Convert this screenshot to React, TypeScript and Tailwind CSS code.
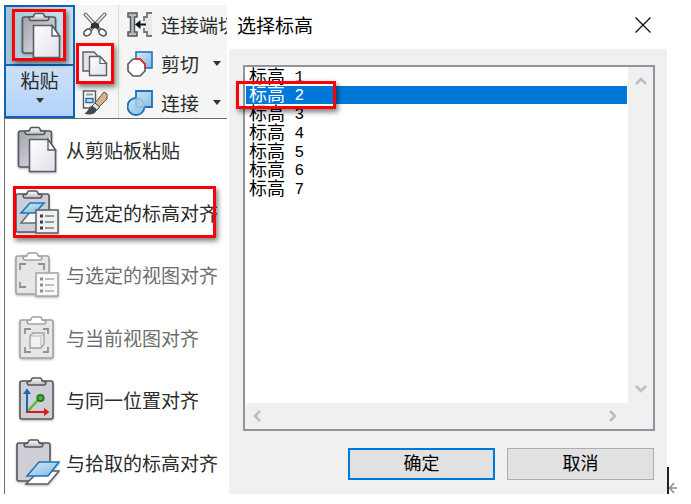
import { ReactNode, useState } from 'react';

const levels = [1, 2, 3, 4, 5, 6, 7];

// Shared gradients, referenced by id from every icon
function IconDefs() {
  return (
    <svg className="absolute w-0 h-0" aria-hidden="true">
      <defs>
        <linearGradient id="board" x1="0" y1="0" x2="1" y2="1">
          <stop offset="0" stopColor="#a0a2ad" />
          <stop offset="1" stopColor="#e6e7ec" />
        </linearGradient>
        <linearGradient id="clip" x1="0" y1="0" x2="0" y2="1">
          <stop offset="0" stopColor="#ffffff" />
          <stop offset="1" stopColor="#b9bbc0" />
        </linearGradient>
        <linearGradient id="paper" x1="0" y1="0" x2="1" y2="1">
          <stop offset="0" stopColor="#ffffff" />
          <stop offset="1" stopColor="#dfe0ea" />
        </linearGradient>
        <linearGradient id="sky" x1="0" y1="0" x2="1" y2="1">
          <stop offset="0" stopColor="#d3ecf8" />
          <stop offset="1" stopColor="#7db9e2" />
        </linearGradient>
      </defs>
    </svg>
  );
}

function Icon({ children }: { children: ReactNode }) {
  return (
    <svg viewBox="0 0 48 48" className="w-12 h-12 shrink-0 drop-shadow-[0_1px_1px_rgba(0,0,0,0.3)]" fill="none" aria-hidden="true">
      {children}
    </svg>
  );
}

function SmallIcon({ children }: { children: ReactNode }) {
  return (
    <svg viewBox="0 0 26 26" className="w-[26px] h-[26px] shrink-0" fill="none" aria-hidden="true">
      {children}
    </svg>
  );
}

function Clipboard({ x, y, faded = false }: { x: number; y: number; faded?: boolean }) {
  const stroke = faded ? '#a3a3a3' : '#55585c';
  return (
    <g transform={`translate(${x} ${y})`} stroke={stroke} strokeWidth="1.6">
      <rect x="1" y="4" width="33" height="38" rx="2" fill={faded ? '#e6e6e6' : '#cdced6'} />
      <path d="M9 4.500H11C12.500 4.500 12 1 14 1H21C23 1 22.500 4.500 24 4.500H26C27.500 4.500 27 8 25 8H10C8 8 7.500 4.500 9 4.500Z" fill={faded ? '#fff' : 'url(#clip)'} />
    </g>
  );
}

function ListBadge({ y, faded = false }: { y: number; faded?: boolean }) {
  return (
    <g transform={`translate(24 ${y})`}>
      <rect x="0" y="0" width="22" height="23" fill={faded ? '#f8f8f8' : '#eef0f2'} stroke={faded ? '#a8a8a8' : '#62676c'} strokeWidth="1.600" />
      <path d="M4 6h3M4 12h3M4 18h3" stroke={faded ? '#8c8c8c' : '#3d4145'} strokeWidth="3" />
      <path d="M9 6h9M9 12h9M9 18h9" stroke={faded ? '#aaa' : '#777c80'} strokeWidth="1.600" />
    </g>
  );
}

function PasteIcon() {
  return (
    <Icon>
      <rect x="6.500" y="5" width="33" height="36" rx="2" fill="url(#board)" stroke="#55585c" strokeWidth="1.600" />
      <path d="M14 5H17C18 5 17.500 1.500 19.500 1.500H26.500C28.500 1.500 28 5 29 5H32C33.500 5 33 8.500 31 8.500H15C13 8.500 12.500 5 14 5Z" fill="url(#clip)" stroke="#55585c" strokeWidth="1.600" />
      <path d="M17.500 13.500H36L43.500 24V45.500H17.500Z" fill="url(#paper)" stroke="#5b5e63" strokeWidth="1.600" />
      <path d="M36 13.500V24H43.500Z" fill="#fff" stroke="#5b5e63" strokeWidth="1.400" />
    </Icon>
  );
}

function LevelIcon() {
  return (
    <Icon>
      <Clipboard x={3} y={1} />
      <path d="M9 34L18 23H33L24 34Z" fill="#f6f7f8" stroke="#6a6e72" strokeWidth="1.600" />
      <path d="M9 24L18 14H32L23 24Z" fill="url(#sky)" stroke="#2274b8" strokeWidth="1.600" />
      <ListBadge y={21} />
    </Icon>
  );
}

function ViewIcon() {
  return (
    <Icon>
      <Clipboard x={3} y={1} faded />
      <path d="M8 19V13H14M26 13H32V19M8 31V36H14" stroke="#909090" strokeWidth="1.800" />
      <ListBadge y={22} faded />
    </Icon>
  );
}

function CurrentViewIcon() {
  return (
    <Icon>
      <Clipboard x={7} y={2} faded />
      <path d="M13 20V15H19M31 15H36V20M13 33V38H19M31 38H36V33" stroke="#909090" strokeWidth="1.800" />
      <path d="M18 22L21 19H32V30L29 34H18Z" fill="#f2f2f2" stroke="#a0a0a0" strokeWidth="1.400" />
      <path d="M18 22H29V34M29 22L32 19" stroke="#b5b5b5" />
    </Icon>
  );
}

function SamePlaceIcon() {
  return (
    <Icon>
      <Clipboard x={7} y={1} />
      <path d="M15 36L26 24" stroke="#4fc22c" strokeWidth="2.500" />
      <circle cx="28.500" cy="22" r="3.200" fill="#5fa84c" stroke="#1f7a18" strokeWidth="1.800" />
      <path d="M15 36V16" stroke="#1767b5" strokeWidth="2" />
      <path d="M11 18L15 12.500L19 18Z" fill="#1767b5" />
      <path d="M14 36H33" stroke="#e0141c" strokeWidth="2" />
      <path d="M32 32L37.500 36L32 40Z" fill="#e0141c" />
    </Icon>
  );
}

function PickLevelIcon() {
  return (
    <Icon>
      <Clipboard x={4} y={0} />
      <path d="M14 45L27 32H47L36 45Z" fill="#fff" stroke="#5b5f63" strokeWidth="1.500" />
      <path d="M15 37L27 23H47L36 37Z" fill="url(#sky)" stroke="#2274b8" strokeWidth="1.600" />
    </Icon>
  );
}

function ScissorsIcon() {
  return (
    <SmallIcon>
      <path d="M3.500 2.500L18 18M22.500 2.500L8 18" stroke="#666b70" strokeWidth="4" strokeLinecap="round" />
      <path d="M3.500 2.500L18 18M22.500 2.500L8 18" stroke="#f1f2f3" strokeWidth="1.800" strokeLinecap="round" />
      <path d="M9 12L13 10L17 12L17 17L13 16L9 17Z" fill="#2f3336" />
      <ellipse cx="5.500" cy="20.500" rx="4" ry="3" transform="rotate(-35 5.500 20.500)" fill="#fff" stroke="#4d5256" strokeWidth="1.600" />
      <ellipse cx="20.500" cy="20.500" rx="4" ry="3" transform="rotate(35 20.500 20.500)" fill="#fff" stroke="#4d5256" strokeWidth="1.600" />
    </SmallIcon>
  );
}

function CopyIcon() {
  return (
    <SmallIcon>
      <path d="M1 1H12L17 6V20H1Z" fill="#e2e3e8" stroke="#5b5e63" strokeWidth="1.400" />
      <path d="M7.500 5.500H18L24.500 12.500V24.500H7.500Z" fill="url(#paper)" stroke="#5b5e63" strokeWidth="1.400" />
      <path d="M18 5.500V12.500H24.500Z" fill="#fff" stroke="#5b5e63" strokeWidth="1.200" />
    </SmallIcon>
  );
}

function BrushIcon() {
  return (
    <SmallIcon>
      <rect x="1.500" y="1" width="12" height="17" fill="#f7f8f9" stroke="#53575b" strokeWidth="1.400" />
      <rect x="4" y="3.500" width="7" height="2" fill="#999da1" />
      <path d="M4 8.500H11V12.500H4Z" fill="#cfe2f2" stroke="#2b6ca8" strokeWidth="1.400" />
      <path d="M22 2L25 4V9L17 17L13 13Z" fill="#d5b68b" stroke="#5a4c3c" />
      <path d="M13 13L17.500 17L15 20L10 16Z" fill="#e5e6e7" stroke="#4a4d50" />
      <path d="M10 15.500L15 20C13 25 7 25.500 2 23.500C6 22.500 6 17.500 10 15.500Z" fill="#45494c" />
    </SmallIcon>
  );
}

function CopeIcon() {
  return (
    <SmallIcon>
      <path d="M17 5H20V1H25V24H20V20H17V16L14 12L17 9Z" fill="#e6e8ea" />
      <path d="M25 1H20V5H17V9M17 16V20H20V24H25" stroke="#74787c" strokeWidth="1.800" />
      <path d="M1 1H10V5H7.500V20H10V24H1V20H3.500V5H1Z" fill="#b5bbc2" stroke="#53575b" strokeWidth="1.500" />
      <path d="M11 12.500H19" stroke="#111" strokeWidth="2" />
      <path d="M13.500 8L8 12.500L13.500 17Z" fill="#111" />
    </SmallIcon>
  );
}

function CutGeometryIcon() {
  return (
    <SmallIcon>
      <rect x="9" y="1" width="16" height="16" fill="url(#sky)" stroke="#2274b8" strokeWidth="1.600" />
      <path d="M6 8H13L18 13V20L13 25H6L1 20V13Z" fill="#fff" stroke="#55585c" strokeWidth="1.600" />
      <path d="M8 8H13L18 13V17" stroke="#ee2a2a" strokeWidth="1.800" />
    </SmallIcon>
  );
}

function JoinIcon() {
  return (
    <SmallIcon>
      <path d="M9 1H25V17H17.500A8.500 8.500 0 1 1 9 8Z" fill="url(#sky)" stroke="#1f6fb5" strokeWidth="1.800" />
      <path d="M9 8A8.500 8.500 0 0 1 17.500 17H9Z" fill="#a9cde8" stroke="#7db1d8" />
    </SmallIcon>
  );
}

function Caret() {
  return (
    <svg viewBox="0 0 8 5" className="w-2 h-[5px]" aria-hidden="true">
      <path d="M0 0H8L4 5Z" fill="#333" />
    </svg>
  );
}

function Chevron({ d }: { d: string }) {
  return (
    <svg viewBox="0 0 12 12" className="w-3 h-3" fill="none" stroke="#bdbdbd" strokeWidth="2.500" aria-hidden="true">
      <path d={d} />
    </svg>
  );
}

const highlight = 'pointer-events-none absolute border-3 border-[#fb0007] shadow-[2px_3px_5px_rgba(0,0,0,0.5)]';

const tools = [
  { label: '连接端切', icon: <CopeIcon />, caret: false },
  { label: '剪切', icon: <CutGeometryIcon />, caret: true },
  { label: '连接', icon: <JoinIcon />, caret: true },
];

const pasteOptions = [
  { label: '从剪贴板粘贴', icon: <PasteIcon /> },
  { label: '与选定的标高对齐', icon: <LevelIcon />, marked: true },
  { label: '与选定的视图对齐', icon: <ViewIcon />, disabled: true },
  { label: '与当前视图对齐', icon: <CurrentViewIcon />, disabled: true },
  { label: '与同一位置对齐', icon: <SamePlaceIcon /> },
  { label: '与拾取的标高对齐', icon: <PickLevelIcon /> },
];

function Ribbon() {
  return (
    <div className="flex h-[113px] bg-[#f5f5f5]">
      <div className="flex w-[71px] shrink-0 flex-col border-2 border-[#0f62b8] bg-[#bfdaf8]">
        <button aria-label="粘贴" className="relative flex h-[59px] items-center justify-center border-b-2 border-[#0f62b8] bg-linear-to-r from-[#a3c6d6] to-[#cbe5f0]">
          <PasteIcon />
          <span className={`${highlight} left-1.5 top-0.5 h-[52px] w-[54px]`} />
        </button>
        <button className="flex flex-1 flex-col items-center gap-1 bg-linear-to-b from-[#cde1f7] to-[#b3d3f8] leading-7">
          粘贴
          <Caret />
        </button>
      </div>
      <div className="flex w-[44px] shrink-0 flex-col items-center border-r border-[#cfe5c5] pr-[3px]">
        <button aria-label="剪切到剪贴板" className="flex h-[39px] shrink-0 items-center"><ScissorsIcon /></button>
        <button aria-label="复制到剪贴板" className="relative flex h-[39px] shrink-0 items-center px-1.5">
          <CopyIcon />
          <span className={`${highlight} inset-x-0 -inset-y-px`} />
        </button>
        <button aria-label="匹配类型" className="flex h-[39px] shrink-0 items-center"><BrushIcon /></button>
      </div>
      <div className="min-w-0 flex-1 overflow-hidden">
        {tools.map(tool => (
          <button key={tool.label} className="flex h-[39px] items-center gap-2 whitespace-nowrap pl-2">
            {tool.icon}
            {tool.label}
            {tool.caret && <span className="pl-1.5"><Caret /></span>}
          </button>
        ))}
      </div>
    </div>
  );
}

function PasteMenu() {
  return (
    <div role="menu" className="grid h-[376px] grid-rows-6 border-l border-t border-[#6b6b6b] bg-white">
      {pasteOptions.map(option => (
        <button
          key={option.label}
          role="menuitem"
          disabled={option.disabled}
          className="relative flex items-center gap-1.5 whitespace-nowrap pl-[7px] text-left disabled:text-[#6d6d6d]"
        >
          {option.icon}
          {option.label}
          {option.marked && <span className={`${highlight} bottom-1.5 left-2 right-[11px] top-1`} />}
        </button>
      ))}
    </div>
  );
}

function LevelDialog() {
  const [selected, setSelected] = useState(2);

  return (
    <section role="dialog" aria-label="选择标高" className="min-w-0 flex-1">
      <header className="flex h-[44px] items-center justify-between bg-white pb-1 pl-2 pr-4">
        <h1 className="text-black">选择标高</h1>
        <button aria-label="关闭">
          <svg viewBox="0 0 16 16" className="h-4 w-4" fill="none" stroke="#111" strokeWidth="1.300">
            <path d="M0.500 0.500L15.500 15.500M15.500 0.500L0.500 15.500" />
          </svg>
        </button>
      </header>

      <div className="bg-[#f0f0f0] pb-3.5 pl-3.5 pr-3 pt-4">
        <div className="flex h-[366px] flex-col border-2 border-[#8e959e] bg-white">
          <div className="flex min-h-0 flex-1">
            <ul role="listbox" aria-label="标高" className="grid h-[131px] flex-1 grid-rows-7 px-px font-['Liberation_Mono','Noto_Sans_CJK_SC',monospace] text-lg text-black">
              {levels.map(level => (
                <li
                  key={level}
                  role="option"
                  aria-selected={level === selected}
                  onClick={() => setSelected(level)}
                  className="relative flex min-h-0 items-end whitespace-pre pl-[3px] leading-4 aria-selected:z-10 aria-selected:bg-[#0078d7] aria-selected:text-white"
                >
                  标高<span className="text-base leading-4"> {level}</span>
                  {level === 2 && <span className={`${highlight} -inset-y-[5px] -left-2.5 w-[100px]`} />}
                </li>
              ))}
            </ul>
            <div className="flex w-[25px] flex-col items-center justify-between bg-[#f0f0f0] py-2">
              <Chevron d="M1 9L6 4L11 9" />
              <Chevron d="M1 3L6 8L11 3" />
            </div>
          </div>
          <div className="flex h-[26px] items-center justify-between bg-[#f0f0f0] pl-1.5 pr-[34px]">
            <Chevron d="M9 1L4 6L9 11" />
            <Chevron d="M3 1L8 6L3 11" />
          </div>
        </div>

        <div className="mt-[17px] flex justify-end gap-3 pr-px text-lg text-black">
          <button className="h-8 w-[147px] border-2 border-[#0078d7] bg-[#e1e1e1] pb-1 leading-none">确定</button>
          <button className="h-8 w-[147px] border border-[#adadad] bg-[#e1e1e1] pb-1 leading-none">取消</button>
        </div>
      </div>
    </section>
  );
}

export default function App() {
  return (
    <main className="flex bg-white pl-1 pt-[5px] font-['Noto_Sans_CJK_SC',sans-serif] text-[19px] leading-6 text-[#2b2b2b]">
      <IconDefs />
      <aside className="w-[223px] shrink-0">
        <Ribbon />
        <PasteMenu />
      </aside>
      <div className="w-0.5 shrink-0" />
      <LevelDialog />
      {/* text caret and paragraph mark of the document behind */}
      <div className="flex w-6 shrink-0 items-end self-stretch">
        <span className="h-[27px] w-0.5 bg-[#222]" />
        <svg viewBox="0 0 8 12" className="h-3 w-2" fill="none" stroke="#8a8a8a" strokeWidth="1.500" aria-hidden="true">
          <path d="M8 6H1M5 1L0.500 6L5 11" />
        </svg>
      </div>
    </main>
  );
}
